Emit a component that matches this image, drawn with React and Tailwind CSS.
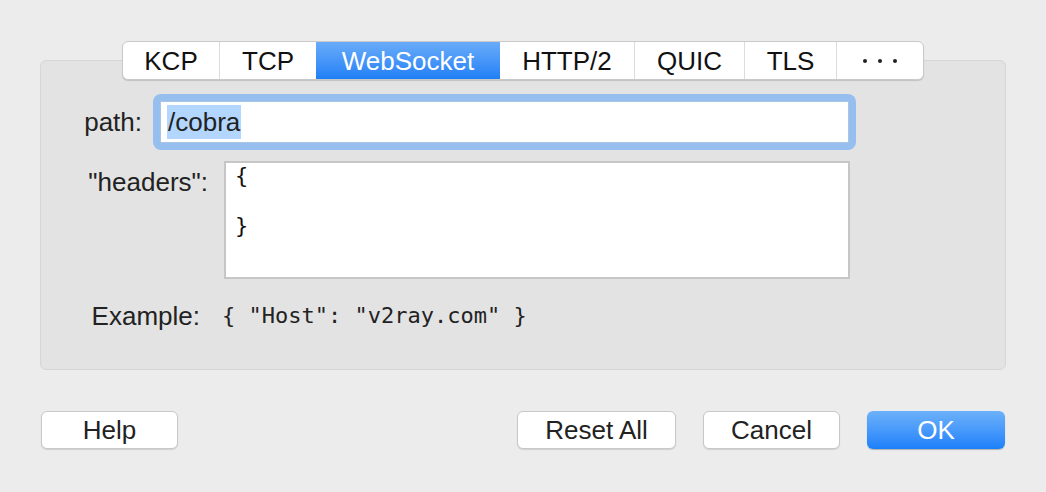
import React from "react";

const sans = { fontFamily: '"Liberation Sans", Arial, sans-serif' };
const mono = { fontFamily: '"DejaVu Sans Mono", "Liberation Mono", monospace' };

const tabs = [
  { label: "KCP", w: "w-[97px]" },
  { label: "TCP", w: "w-[96px]" },
  { label: "WebSocket", w: "w-[184px]", active: true },
  { label: "HTTP/2", w: "w-[135px]" },
  { label: "QUIC", w: "w-[110px]" },
  { label: "TLS", w: "w-[92px]" },
];

function Btn({ children, className = "", primary }) {
  return (
    <div
      className={
        "h-[38px] flex items-center justify-center rounded-[6px] text-[26px] leading-none " +
        (primary
          ? "bg-gradient-to-b from-[#6cb1fa] to-[#1b80fa] text-white shadow-[0_1px_1px_rgba(0,0,0,0.25)]"
          : "bg-white text-[#222] border border-[#c8c8c8] shadow-[0_1px_1px_rgba(0,0,0,0.12)]") +
        " " +
        className
      }
    >
      {children}
    </div>
  );
}

export default function App() {
  return (
    <div className="w-[1046px] h-[492px] bg-[#ececec] pt-[41px] text-[#222]" style={sans}>
      {/* segmented tab control */}
      <div className="relative z-10 flex justify-center">
        <div className="flex h-[39px] rounded-[6px] bg-white border border-[#c9c9c9] shadow-[0_1px_1px_rgba(0,0,0,0.15)] overflow-hidden">
          {tabs.map((t, i) => (
            <div
              key={t.label}
              className={
                t.w +
                " flex items-center justify-center text-[26px] leading-none " +
                (t.active
                  ? "bg-gradient-to-b from-[#68acf9] to-[#1f7ff6] text-white"
                  : "text-[#111] " + (tabs[i + 1] && tabs[i + 1].active ? "" : "border-r border-[#dcdcdc]"))
              }
            >
              {t.label}
            </div>
          ))}
          <div className="w-[86px] flex items-center justify-center gap-[11px]">
            <span className="w-[4px] h-[4px] rounded-full bg-[#222]" />
            <span className="w-[4px] h-[4px] rounded-full bg-[#222]" />
            <span className="w-[4px] h-[4px] rounded-full bg-[#222]" />
          </div>
        </div>
      </div>

      {/* panel */}
      <div className="mx-[40px] w-[966px] mt-[-20px] h-[310px] rounded-[6px] bg-[#e3e3e3] border border-[#d6d6d6] pt-[33px]">
        {/* path row */}
        <div className="flex items-center">
          <div className="w-[101px] text-right text-[26px] leading-none">path:</div>
          <div className="ml-[11px] w-[703px] h-[56px] rounded-[8px] bg-[#96bfef] p-[7px]">
            <div className="h-full bg-white border border-[#aac4e2] flex items-center pl-[6px]">
              <span className="bg-[#b3d6fe] text-[26px] leading-[34px] h-[34px] px-[1px]">/cobra</span>
            </div>
          </div>
        </div>

        {/* headers row */}
        <div className="flex mt-[11px]">
          <div className="w-[167px] text-right text-[26px] leading-none pt-[8px]">"headers":</div>
          <div
            className="ml-[16px] w-[626px] h-[118px] bg-white border-2 border-[#c6c6c6] pl-[9px] pt-[0px] text-[22px] leading-[25px] whitespace-pre text-[#111]"
            style={mono}
          >
            {"{\n\n}"}
          </div>
        </div>

        {/* example row */}
        <div className="flex items-center mt-[24px]">
          <div className="w-[159px] text-right text-[26px] leading-none">Example:</div>
          <div className="ml-[22px] text-[22px] leading-none text-[#222] whitespace-pre" style={mono}>
            {'{ "Host": "v2ray.com" }'}
          </div>
        </div>
      </div>

      {/* buttons */}
      <div className="flex items-center mt-[41px] pl-[41px] w-[1005px]">
        <Btn className="w-[137px]">Help</Btn>
        <div className="flex-1" />
        <Btn className="w-[159px]">Reset All</Btn>
        <Btn className="w-[137px] ml-[27px]">Cancel</Btn>
        <Btn className="w-[138px] ml-[27px]" primary>OK</Btn>
      </div>
    </div>
  );
}
